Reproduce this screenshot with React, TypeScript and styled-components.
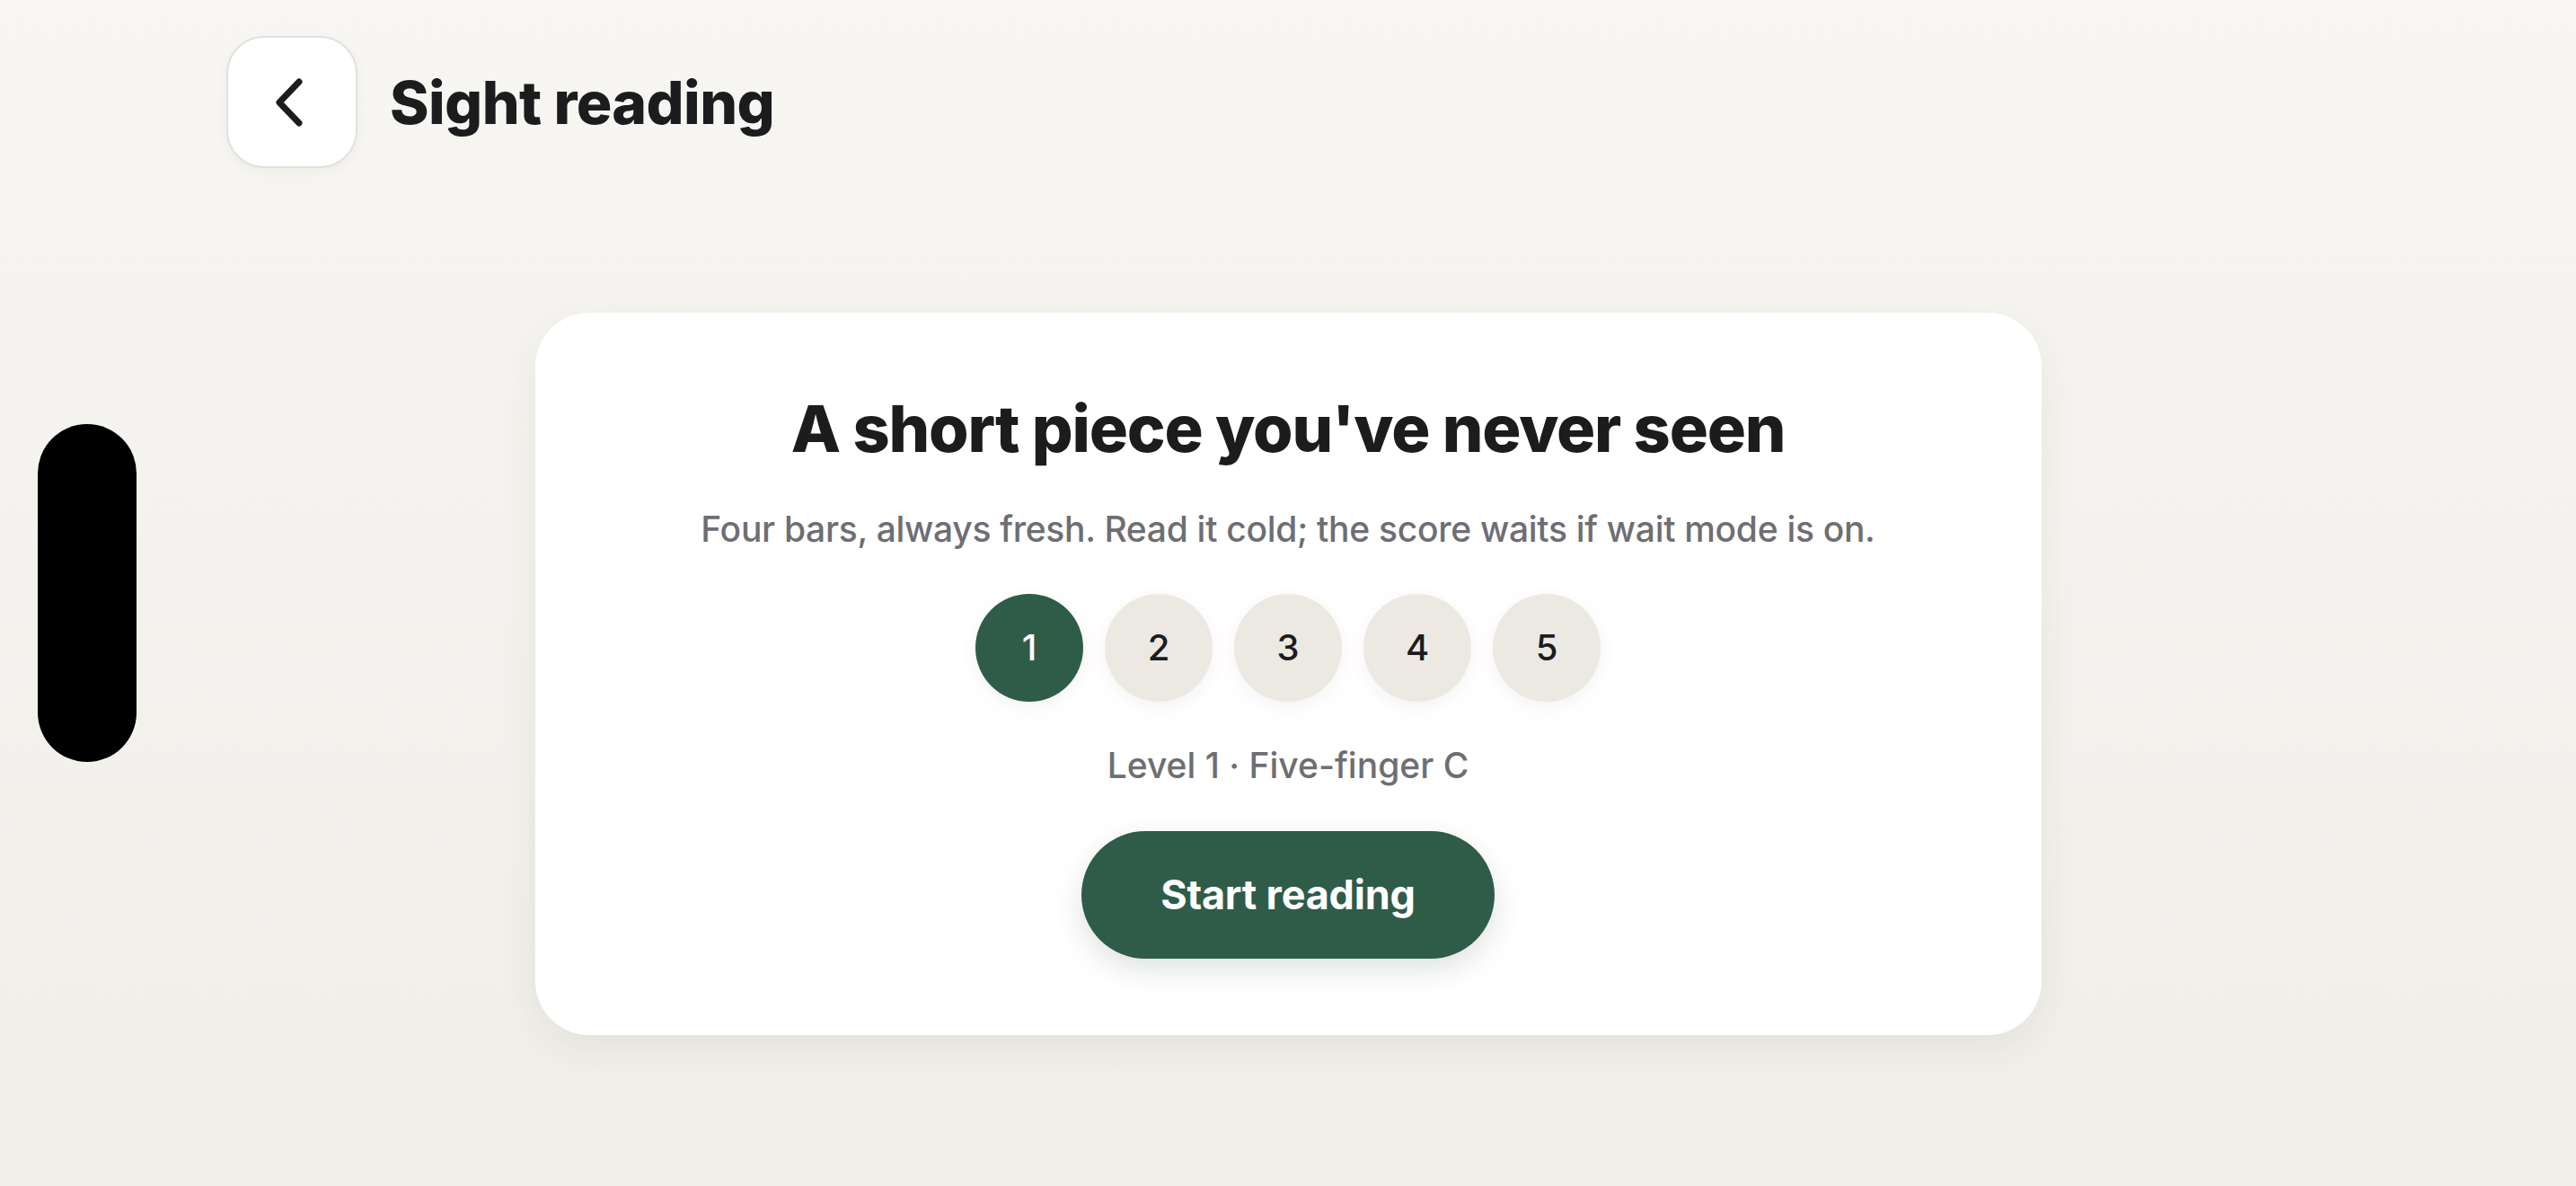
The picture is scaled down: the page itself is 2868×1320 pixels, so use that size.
import { useState } from 'react';
import styled, { createGlobalStyle } from 'styled-components';

const GlobalStyle = createGlobalStyle`
  html, body {
    margin: 0;
    padding: 0;
  }
  body {
    background: linear-gradient(180deg, #f7f6f2 0%, #efeee9 100%);
    font-family: Inter, "Noto Sans", "Liberation Sans", sans-serif;
    color: #1c1c1e;
    -webkit-font-smoothing: antialiased;
  }
`;

const Screen = styled.div`
  position: relative;
  height: 1320px;
  display: flex;
  flex-direction: column;
  overflow: hidden;
`;

// camera cutout, sits over the page
const Island = styled.div`
  position: absolute;
  left: 42px;
  top: 472px;
  width: 110px;
  height: 376px;
  border-radius: 55px;
  background: #000;
`;

const Header = styled.header`
  display: flex;
  align-items: center;
  gap: 36px;
  padding: 40px 0 0 252px;
`;

const BackButton = styled.button`
  width: 146px;
  height: 147px;
  box-sizing: border-box;
  border-radius: 42px;
  border: 2px solid #e1e1df;
  background: #fff;
  display: flex;
  align-items: center;
  justify-content: center;
  padding: 0 6px 0 0;
  box-shadow: 0 4px 14px rgba(0, 0, 0, 0.04);
  cursor: pointer;
`;

const Title = styled.h1`
  margin: 0;
  font-size: 66px;
  font-weight: 800;
  letter-spacing: -0.6px;
  color: #1c1c1e;
`;

const Main = styled.main`
  flex: 1;
  display: flex;
  align-items: center;
  justify-content: center;
  padding-bottom: 8px;
`;

const Card = styled.section`
  width: 1677px;
  box-sizing: border-box;
  padding: 86px 0 85px;
  background: #fff;
  border-radius: 60px;
  box-shadow: 0 14px 44px rgba(60, 50, 30, 0.07);
  display: flex;
  flex-direction: column;
  align-items: center;
`;

const Heading = styled.h2`
  margin: 0;
  font-size: 72px;
  line-height: 86px;
  font-weight: 800;
  letter-spacing: -1.2px;
  color: #1c1c1e;
`;

const Subtitle = styled.p`
  margin: 43px 0 0;
  font-size: 39px;
  line-height: 51px;
  font-weight: 500;
  letter-spacing: -0.3px;
  color: #6e6e73;
`;

const Levels = styled.div`
  display: flex;
  gap: 24px;
  margin-top: 47px;
`;

const LevelDot = styled.button<{ $active: boolean }>`
  width: 120px;
  height: 120px;
  border-radius: 50%;
  border: none;
  padding: 0;
  font-family: inherit;
  font-size: 40px;
  font-weight: 500;
  background: ${p => (p.$active ? '#2e5c48' : '#ece9e2')};
  color: ${p => (p.$active ? '#fff' : '#1c1c1e')};
  box-shadow: 0 6px 22px rgba(0, 0, 0, 0.05);
  cursor: pointer;
`;

const LevelLabel = styled.p`
  margin: 45px 0 0;
  font-size: 39px;
  line-height: 51px;
  font-weight: 500;
  color: #6e6e73;
`;

const StartButton = styled.button`
  margin-top: 48px;
  width: 460px;
  height: 142px;
  border-radius: 71px;
  border: none;
  background: #2e5c48;
  color: #fff;
  font-family: inherit;
  font-size: 45px;
  font-weight: 700;
  letter-spacing: -0.2px;
  box-shadow: 0 12px 32px rgba(30, 50, 40, 0.14);
  cursor: pointer;
`;

const levelNames = ['Five-finger C', 'Five-finger G', 'Simple hands together', 'Key signatures', 'Mixed rhythms'];

function App() {
  const [level, setLevel] = useState(1);

  return (
    <>
      <GlobalStyle />
      <Screen>
        <Island />
        <Header>
          <BackButton aria-label="Back">
            <svg width="36" height="56" viewBox="0 0 36 56" fill="none">
              <polyline points="29,5 7,28 29,51" stroke="#1c1c1e" strokeWidth="7" strokeLinecap="round" strokeLinejoin="round" />
            </svg>
          </BackButton>
          <Title>Sight reading</Title>
        </Header>
        <Main>
          <Card>
            <Heading>A short piece you've never seen</Heading>
            <Subtitle>Four bars, always fresh. Read it cold; the score waits if wait mode is on.</Subtitle>
            <Levels>
              {[1, 2, 3, 4, 5].map(n => (
                <LevelDot key={n} $active={n === level} onClick={() => setLevel(n)}>
                  {n}
                </LevelDot>
              ))}
            </Levels>
            <LevelLabel>Level {level} · {levelNames[level - 1]}</LevelLabel>
            <StartButton>Start reading</StartButton>
          </Card>
        </Main>
      </Screen>
    </>
  );
}

export default App;
